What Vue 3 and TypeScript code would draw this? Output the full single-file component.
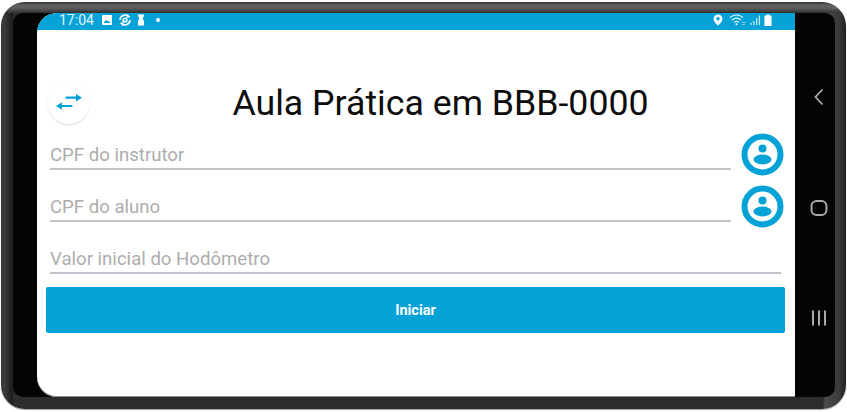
<script setup lang="ts">
const fields = [
  { label: 'CPF do instrutor', icon: true },
  { label: 'CPF do aluno', icon: true },
  { label: 'Valor inicial do Hodômetro', icon: false },
]
</script>

<template>
  <div class="page">
    <div class="bezel">
      <div class="phone">
        <div class="edge"></div>
        <main class="screen">
          <div class="status">
            <div class="status-left">
              <span class="time">17:04</span>
              <svg width="12" height="12" viewBox="0 0 12 12"><rect x="1" y="1" width="10" height="10" rx="1" fill="#fff"/><path d="M2.500 9 L5 5.800 L6.700 7.600 L7.800 6.600 L9.500 9Z" fill="#04a2d6"/></svg>
              <svg width="14" height="14" viewBox="0 0 14 14" fill="none" stroke="#fff" stroke-width="1.600"><path d="M2 7a5 5 0 0 1 8.600-3.400"/><path d="M12 7a5 5 0 0 1-8.600 3.400"/><circle cx="7" cy="7" r="1.800"/><path d="M8.500 1.500l2.600 2.200-3 .8M5.500 12.500l-2.600-2.200 3-.8" stroke-width="1.200"/></svg>
              <svg width="8" height="12" viewBox="0 0 8 12"><path d="M1 0.500h6v1.500L5.500 4.500 7 7v4.500H1V7L2.500 4.500 1 2z" fill="#fff"/><circle cx="4" cy="4" r="1.800" fill="#fff"/></svg>
              <span class="dot"></span>
            </div>
            <div class="status-right">
              <svg width="10" height="12" viewBox="0 0 10 12"><path d="M5 0.500a4.400 4.400 0 0 1 4.400 4.400C9.400 8 5 11.500 5 11.500S.6 8 .6 4.900A4.400 4.400 0 0 1 5 .5z" fill="#fff"/><circle cx="5" cy="4.800" r="1.700" fill="#04a2d6"/></svg>
              <svg class="wifi" width="18" height="12" viewBox="0 0 18 12" fill="none" stroke="#dff3fa" stroke-width="1.200"><path d="M1 3.500c4-3.200 9-3.200 13 0"/><path d="M3 6c2.800-2.200 6.200-2.200 9 0"/><path d="M5.200 8.300c1.500-1.100 3.100-1.100 4.600 0"/><circle cx="7.500" cy="10.300" r="1" fill="#fff" stroke="none"/><path d="M13 8.500h4M13 10.500h3" stroke-width=".8" opacity=".7"/></svg>
              <svg width="11" height="12" viewBox="0 0 12 12" fill="#bfe6f4"><rect x="0.500" y="9" width="1.500" height="2.500"/><rect x="3.500" y="7" width="1.500" height="4.500"/><rect x="6.500" y="4" width="1.500" height="7.500"/><rect x="9.500" y="1" width="1.500" height="10.500"/></svg>
              <svg width="8" height="12" viewBox="0 0 8 12"><path d="M2.500 0.500h3v1H7a.6.6 0 0 1 .6.600v9.300a.6.6 0 0 1-.6.600H1a.6.6 0 0 1-.6-.600V2.100A.6.6 0 0 1 1 1.500h1.500z" fill="#fff"/></svg>
            </div>
          </div>

          <div class="content">
            <header class="head">
              <button class="swap" aria-label="Trocar">
                <svg width="26" height="20" viewBox="0 0 26 20" fill="#04a2d6">
                  <path d="M10.500 3.600h9.500V1L26 4.700 20 8.400V5.800H10.500a1.100 1.100 0 0 1 0-2.200z"/>
                  <path d="M15.500 11.900H6V9.300L0 13l6 3.700v-2.600h9.500a1.100 1.100 0 0 0 0-2.200z"/>
                </svg>
              </button>
              <h1>Aula Prática em BBB-0000</h1>
            </header>

            <div v-for="f in fields" :key="f.label" class="row" :class="{ plain: !f.icon }">
              <label class="field">{{ f.label }}</label>
              <span v-if="f.icon" class="avatar">
                <svg width="43" height="43" viewBox="0 0 43 43">
                  <circle cx="21.500" cy="21.500" r="18" fill="#fff" stroke="#04a2d6" stroke-width="6"/>
                  <circle cx="21.500" cy="15.500" r="4" fill="#04a2d6"/>
                  <ellipse cx="21.500" cy="26.500" rx="9" ry="5" fill="#04a2d6"/>
                </svg>
              </span>
            </div>

            <button class="start">Iniciar</button>
          </div>
        </main>
        <nav class="nav">
          <svg width="14" height="18" viewBox="0 0 14 18" fill="none" stroke="#a9a9a9" stroke-width="1.800"><path d="M10.500 1.500L3.500 9l7 7.500"/></svg>
          <svg width="18" height="16" viewBox="0 0 18 16" fill="none" stroke="#a9a9a9" stroke-width="2"><rect x="1.500" y="1" width="15" height="14" rx="5"/></svg>
          <svg width="16" height="16" viewBox="0 0 16 16" fill="#a9a9a9"><rect x="1" y="0.500" width="2" height="15"/><rect x="7" y="0.500" width="2" height="15"/><rect x="13" y="0.500" width="2" height="15"/></svg>
        </nav>
      </div>
    </div>
  </div>
</template>

<style scoped>
.page {
  width: 847px;
  height: 412px;
  background: #fff;
  padding: 2px 1px 3px;
  box-sizing: border-box;
  font-family: Roboto, "Liberation Sans", sans-serif;
}
.bezel {
  height: 100%;
  box-sizing: border-box;
  padding: 11px 11px 11px 12px;
  border-radius: 24px;
  background:
    linear-gradient(#2f2f2f 0, #5e5e5e 3px, #5e5e5e 6px, #303030 11px) top / 100% 11px no-repeat,
    linear-gradient(90deg, #3a3a3a 0, #3a3a3a 4px, #202020 10px, #202020 12px, #2c2c2c 12px, #2c2c2c 822px, #4a4a4a 824px, #3a3a3a 838px, #222 845px);
  box-shadow: 0 1px 1px #a0a0a0;
}
.phone {
  height: 384px;
  display: flex;
  background: #040404;
  border-radius: 10px;
  overflow: hidden;
}
.edge {
  width: 24px;
  flex: none;
}
.screen {
  width: 758px;
  flex: none;
  background: #fff;
  border-radius: 20px 0 0 20px;
  overflow: hidden;
  display: flex;
  flex-direction: column;
  box-shadow: inset 0 -1px 0 #8a8a8a;
}
.status {
  height: 17px;
  flex: none;
  background: #04a2d6;
  display: flex;
  justify-content: space-between;
  align-items: center;
  padding: 0 0 3px 22px;
  box-sizing: border-box;
  color: #e6f5fb;
}
.status-left {
  display: flex;
  align-items: center;
  gap: 5px;
}
.time {
  font-size: 14px;
  margin-right: 2px;
}
.dot {
  width: 4px;
  height: 4px;
  border-radius: 50%;
  background: #fff;
  margin-left: 6px;
}
.status-right {
  display: flex;
  align-items: center;
  gap: 3px;
  padding-right: 23px;
}
.wifi {
  margin-left: 3px;
}
.content {
  display: flex;
  flex-direction: column;
  padding: 0 10px 0 9px;
}
.head {
  display: flex;
  align-items: center;
  height: 42px;
  margin-top: 52px;
  padding-left: 2px;
}
.swap {
  width: 42px;
  height: 42px;
  border: none;
  border-radius: 50%;
  background: #fff;
  box-shadow: 0 1px 2px rgba(0, 0, 0, 0.14);
  padding: 0;
  display: flex;
  align-items: center;
  justify-content: center;
  flex: none;
}
h1 {
  margin: 0;
  flex: 1;
  text-align: center;
  font-weight: 400;
  font-size: 35.700px;
  line-height: 44px;
  color: #0d0d0d;
  padding-left: 6px;
  white-space: nowrap;
}
.row {
  height: 52px;
  display: flex;
  align-items: flex-end;
  gap: 10px;
  padding-left: 4px;
}
.head + .row {
  height: 46px;
}
.field {
  flex: 1;
  height: 32px;
  box-sizing: border-box;
  border-bottom: 2px solid #c4c4c4;
  font-size: 18.600px;
  line-height: 35px;
  color: #adadad;
}
.plain {
  padding-right: 4px;
}
.plain .field {
  border-bottom-color: #c6bfcb;
}
.avatar {
  width: 43px;
  height: 43px;
  flex: none;
  margin: 0 1px -6px 0;
  display: flex;
}
.start {
  margin-top: 13px;
  height: 46px;
  border: none;
  border-radius: 2px;
  background: #04a2d6;
  color: #fff;
  font-family: inherit;
  font-weight: 700;
  font-size: 14.500px;
}
.nav {
  flex: 1;
  display: flex;
  flex-direction: column;
  align-items: center;
  justify-content: space-between;
  padding: 75px 0 71px 7px;
}
</style>
